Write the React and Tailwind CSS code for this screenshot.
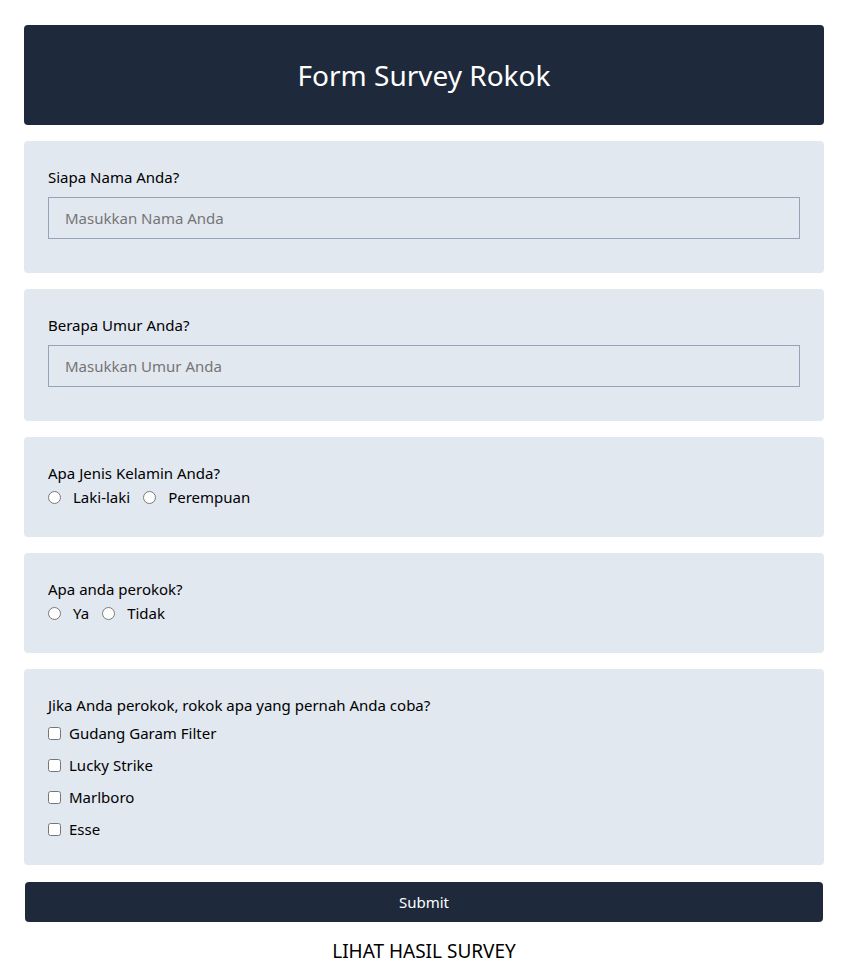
import React, { useState } from 'react';

const font = { fontFamily: '"Noto Sans", "Open Sans", sans-serif' };

function Card({ children, className = '' }) {
  return <div className={`rounded bg-[#e2e8f0] px-6 pt-6 ${className}`}>{children}</div>;
}

export default function App() {
  const [nama, setNama] = useState('');
  const [umur, setUmur] = useState('');

  const rokok = ['Gudang Garam Filter', 'Lucky Strike', 'Marlboro', 'Esse'];

  return (
    <div className="px-6 pt-[25px] pb-4 text-[15px] text-black" style={font}>
      <div className="max-w-[800px]">
        {/* Header */}
        <div className="flex h-[100px] items-center justify-center rounded bg-[#1e293b]">
          <h1 className="text-[28px] text-white">Form Survey Rokok</h1>
        </div>

        <form className="mt-4 flex flex-col" onSubmit={(e) => e.preventDefault()}>
          <div className="flex flex-col gap-4">
            <Card className="pb-[34px]">
              <label className="block leading-6">Siapa Nama Anda?</label>
              <input
                value={nama}
                onChange={(e) => setNama(e.target.value)}
                placeholder="Masukkan Nama Anda"
                className="mt-2 block h-[42px] w-full border border-[#94a3b8] bg-transparent px-4 text-[15px] outline-none placeholder:text-[#757575]"
              />
            </Card>

            <Card className="pb-[34px]">
              <label className="block leading-6">Berapa Umur Anda?</label>
              <input
                value={umur}
                onChange={(e) => setUmur(e.target.value)}
                placeholder="Masukkan Umur Anda"
                className="mt-2 block h-[42px] w-full border border-[#94a3b8] bg-transparent px-4 text-[15px] outline-none placeholder:text-[#757575]"
              />
            </Card>

            <Card className="pb-7">
              <p className="leading-6">Apa Jenis Kelamin Anda?</p>
              <div className="flex h-6 items-center">
                <input type="radio" name="jk" className="h-[13px] w-[13px]" />
                <span className="ml-3">Laki-laki</span>
                <input type="radio" name="jk" className="ml-[13px] h-[13px] w-[13px]" />
                <span className="ml-3">Perempuan</span>
              </div>
            </Card>

            <Card className="pb-7">
              <p className="leading-6">Apa anda perokok?</p>
              <div className="flex h-6 items-center">
                <input type="radio" name="perokok" className="h-[13px] w-[13px]" />
                <span className="ml-3">Ya</span>
                <input type="radio" name="perokok" className="ml-[13px] h-[13px] w-[13px]" />
                <span className="ml-3">Tidak</span>
              </div>
            </Card>

            <Card className="pb-6">
              <p className="leading-6">Jika Anda perokok, rokok apa yang pernah Anda coba?</p>
              <div className="mt-1 flex flex-col gap-2">
                {rokok.map((r) => (
                  <label key={r} className="flex h-6 items-center">
                    <input type="checkbox" className="h-[13px] w-[13px]" />
                    <span className="ml-2">{r}</span>
                  </label>
                ))}
              </div>
            </Card>
          </div>

          <button
            type="submit"
            className="mx-px mt-[17px] h-10 rounded bg-[#1e293b] text-[15px] text-white"
          >
            Submit
          </button>
        </form>

        <p className="mt-[17px] text-center text-[19px] leading-6">LIHAT HASIL SURVEY</p>
      </div>
    </div>
  );
}
